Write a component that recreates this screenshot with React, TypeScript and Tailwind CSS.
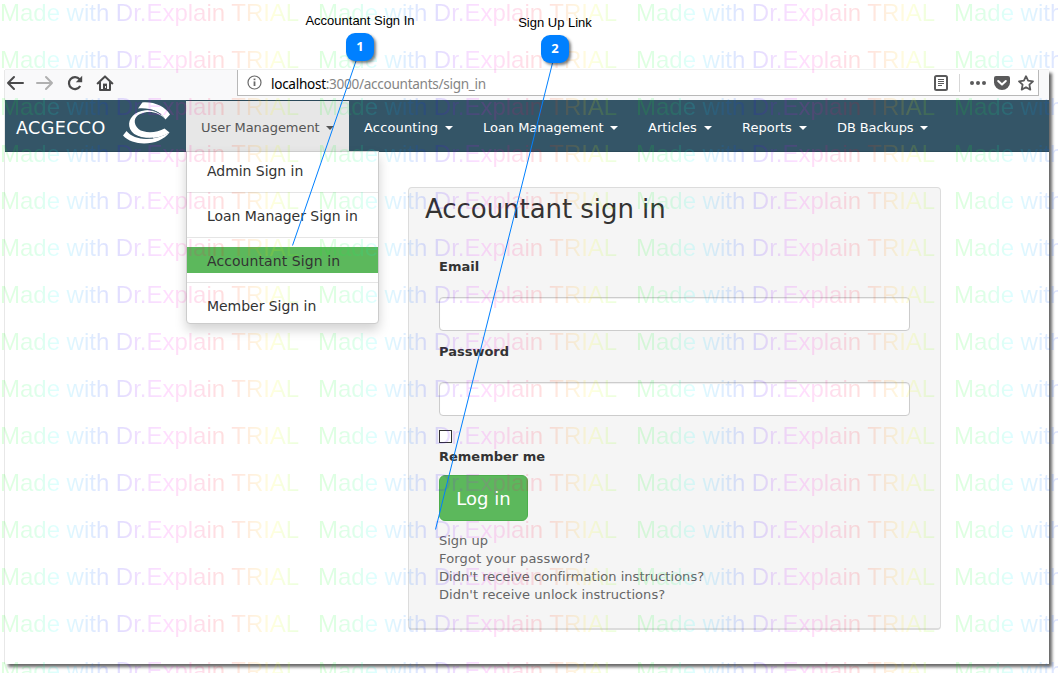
import React from "react";

type MenuItem = { label: string; width: string; tracking: string };

const navItems: MenuItem[] = [
  { label: "Accounting", width: "w-[119px]", tracking: "tracking-[0.16px]" },
  { label: "Loan Management", width: "w-[165px]", tracking: "tracking-[-0.03px]" },
  { label: "Articles", width: "w-[94px]", tracking: "tracking-[0.05px]" },
  { label: "Reports", width: "w-[95px]", tracking: "tracking-[0px]" },
  { label: "DB Backups", width: "w-[121px]", tracking: "tracking-[-0.1px]" },
];

const signIns = ["Admin Sign in", "Loan Manager Sign in", "Accountant Sign in", "Member Sign in"];

const links = [
  { text: "Sign up", tracking: "tracking-[0px]" },
  { text: "Forgot your password?", tracking: "tracking-[0.18px]" },
  { text: "Didn't receive confirmation instructions?", tracking: "tracking-[0.03px]" },
  { text: "Didn't receive unlock instructions?", tracking: "tracking-[0.05px]" },
];

function Caret() {
  return <span className="mt-px h-0 w-0 border-x-4 border-t-4 border-x-transparent border-t-current" />;
}

function Toolbar() {
  return (
    <div className="flex h-[30px] items-start bg-[#f9f9fa] text-[#4a4a4b]">
      <svg className="mt-[5px] ml-px h-4 w-[18px]" viewBox="0 0 18 16" fill="none" stroke="currentColor" strokeWidth="2" strokeLinecap="round" strokeLinejoin="round">
        <path d="M17 8H2M8 2 2 8l6 6" />
      </svg>
      <svg className="mt-[5px] ml-[12px] h-4 w-[18px] text-[#b0b0b0]" viewBox="0 0 18 16" fill="none" stroke="currentColor" strokeWidth="2" strokeLinecap="round" strokeLinejoin="round">
        <path d="M1 8h15M10 2l6 6-6 6" />
      </svg>
      <svg className="mt-[5px] ml-[13px] h-4 w-4" viewBox="0 0 16 16" fill="none" stroke="currentColor" strokeWidth="2.2">
        <path d="M12.6 4.2A6 6 0 1 0 13.2 11" />
        <path d="M15.2.8v6.4H8.8z" fill="currentColor" stroke="none" />
      </svg>
      <svg className="mt-[5px] ml-[13px] h-4 w-[18px]" viewBox="0 0 18 16" fill="none" stroke="currentColor" strokeWidth="2" strokeLinejoin="round" strokeLinecap="round">
        <path d="M1.600 8.400 9 1.400l7.400 7M4 7.600V15h10V7.600" />
        <path d="M7 8.600h4V15H7z" fill="currentColor" stroke="none" />
        <path d="M9.500 11.500v1" stroke="#fff" strokeWidth="1" />
      </svg>
      <div className="ml-[123px] flex h-[26px] w-[802px] items-center border border-t-0 border-[#b8b8b8] bg-white">
        <svg className="ml-[9px] h-[15px] w-[15px] text-[#6a6a6a]" viewBox="0 0 15 15" fill="none" stroke="currentColor">
          <circle cx="7.5" cy="7.5" r="6.5" strokeWidth="1.2" />
          <path d="M7.500 6.400V11" strokeWidth="1.8" />
          <path d="M7.500 3.600v1.600" strokeWidth="1.8" />
        </svg>
        <div className="ml-[9px] pt-[3px] font-['Noto_Sans',sans-serif] text-[13.6px] leading-5 tracking-[-0.3px] whitespace-nowrap text-[#858585]">
          <span className="text-black">localhost</span>:3000/accountants/sign_in
        </div>
        <div className="ml-auto flex items-center text-[#5a5a5b]">
          <svg className="h-4 w-[14px]" viewBox="0 0 14 16" fill="none" stroke="currentColor">
            <rect x="1" y="1" width="12" height="14" rx="1.5" strokeWidth="2" />
            <path d="M4 4.500h6M4 6.500h6M4 8.500h6M4 10.500h4" strokeWidth="1" />
          </svg>
          <span className="ml-[11px] h-[18px] w-px bg-[#d7d7d7]" />
          <svg className="ml-[10px] h-4 w-4" viewBox="0 0 16 16" fill="currentColor">
            <circle cx="2" cy="8" r="2" />
            <circle cx="8" cy="8" r="2" />
            <circle cx="14" cy="8" r="2" />
          </svg>
          <svg className="ml-[8px] h-4 w-4" viewBox="0 0 16 16">
            <path d="M2 1h12a2 2 0 0 1 2 2v4.500a8 7.500 0 0 1-16 0V3a2 2 0 0 1 2-2z" fill="currentColor" />
            <path d="M4.200 6 8 9.600 11.800 6" fill="none" stroke="#fff" strokeWidth="2" strokeLinecap="round" strokeLinejoin="round" />
          </svg>
          <svg className="mr-[4px] ml-[8px] h-4 w-4" viewBox="0 0 16 16" fill="none" stroke="currentColor" strokeWidth="1.8" strokeLinejoin="round">
            <path d="m8 1.200 2.100 4.500 4.900.6-3.600 3.400.9 4.900L8 12.200l-4.300 2.400.9-4.900L1 6.300l4.900-.6z" />
          </svg>
        </div>
      </div>
    </div>
  );
}

function Logo() {
  return (
    <svg className="h-[44px] w-[50px]" viewBox="0 0 50 44" fill="#fff">
      <path d="M16 7.500 20.300 1.500C32 .5 43 5.500 48 13.500L43.500 18.500C38 10 28 6.500 16 7.500z" />
      <path d="M43.500 18.500C37 8.500 24 6 13.500 12.500 5.500 18 5 27 12 33 22 39.500 37 38 47.500 31.500L42.500 27.500C35 32 22 32.500 16.500 28 11 23 11.500 16 18 13 27 9 37 11 43.500 18.500z" />
      <path d="M4.500 30C12 39.500 32 41 47.500 31.500 38 44.500 12 46.500 1 34.500z" />
      <path d="M14 11C23 6.800 32 8.500 39 13.500" fill="none" stroke="#345567" strokeWidth="0.8" />
      <path d="M8 30C13 36 22 38 31 37" fill="none" stroke="#345567" strokeWidth="0.8" />
    </svg>
  );
}

function Navbar() {
  return (
    <nav className="flex h-[52px] border-b border-[#2b4a5a] bg-[#345567] text-[13px] text-white">
      <div className="flex w-[181px] shrink-0 items-center">
        <span className="ml-[11px] w-[106px] pt-[6px] text-[17.6px] tracking-[0.35px]">ACGECCO</span>
        <div className="mb-[5px]"><Logo /></div>
      </div>
      <div className="relative h-[51px] w-[163px] shrink-0 border-t border-[#2b4a5a] bg-[#e7e7e7] text-[#555]">
        <div className="flex h-full items-center justify-between pt-[3px] pr-[15px] pl-[15px] whitespace-nowrap">
          <span className="tracking-[-0.05px]">User Management</span>
          <Caret />
        </div>
        <ul className="absolute top-[50px] left-0 w-[193px] rounded-b-[4px] border border-[#ccc] bg-white pt-[5px] pb-[5px] text-[14px] text-[#333] shadow-[0_6px_12px_rgba(0,0,0,0.175)]">
          {signIns.map((label, index) => (
            <React.Fragment key={label}>
              {index > 0 && <li className="my-[9px] h-px bg-[#e5e5e5]" />}
              <li className={index === 2 ? "h-[26px] bg-[#5cb85c] pl-5 leading-[28px] tracking-[0.08px] whitespace-nowrap" : "h-[26px] pl-5 leading-[28px] tracking-[-0.04px] whitespace-nowrap"}>{label}</li>
            </React.Fragment>
          ))}
        </ul>
      </div>
      {navItems.map((item) => (
        <div key={item.label} className={`flex shrink-0 items-center justify-between px-[15px] pt-[4px] whitespace-nowrap ${item.width}`}>
          <span className={item.tracking}>{item.label}</span>
          <Caret />
        </div>
      ))}
    </nav>
  );
}

function SignInForm() {
  return (
    <form className="mt-[35px] ml-[403px] flex h-[443px] w-[533px] flex-col rounded-[4px] border border-b-2 border-[#dcdcdc] bg-[#f5f5f5] pr-[30px] pl-[30px] text-[13px] text-[#333]">
      <h1 className="mt-[4px] -ml-[14px] text-[26px] leading-[34px] tracking-[-0.05px] whitespace-nowrap">Accountant sign in</h1>
      <label className="mt-[31px] leading-5 font-bold">Email</label>
      <input className="mt-[20px] block h-[34px] w-[471px] rounded-[4px] border border-[#ccc] bg-white shadow-[inset_0_1px_1px_rgba(0,0,0,0.075)]" />
      <label className="mt-[11px] leading-5 font-bold">Password</label>
      <input className="mt-[20px] block h-[34px] w-[471px] rounded-[4px] border border-[#ccc] bg-white shadow-[inset_0_1px_1px_rgba(0,0,0,0.075)]" />
      <span className="mt-[14px] block h-[13px] w-[13px] border border-[#333] bg-white" />
      <label className="mt-[4px] leading-5 font-bold">Remember me</label>
      <button type="button" className="mt-[8px] h-[46px] w-[89px] rounded-[6px] border border-[#4cae4c] bg-[#5cb85c] text-[18px] text-white">Log in</button>
      <div className="mt-[11px] flex flex-col leading-[18px] whitespace-nowrap text-[#666]">
        {links.map(({ text, tracking }) => (
          <a key={text} className={tracking}>{text}</a>
        ))}
      </div>
    </form>
  );
}

function Watermark() {
  return (
    <div className="pointer-events-none absolute inset-0 overflow-hidden opacity-[0.125]">
      <div className="-mt-px grid w-[1272px] grid-cols-4">
        {Array.from({ length: 60 }, (_, i) => (
          <div key={i} className="h-[47px] w-[318px]">
            <span className="inline-block w-[300px] bg-linear-[90deg,#00ff00_0%,#00ff60_12%,#00ffff_19%,#0080ff_29%,#0000ff_38%,#8000ff_45%,#ff00ff_55%,#ff0080_65%,#ff0000_75%,#ff8000_83%,#ffff00_91%,#80ff00_98%] bg-clip-text font-['Liberation_Sans',Arial,sans-serif] text-[24px] leading-[27px] tracking-[-0.02px] whitespace-nowrap text-transparent">
              Made with Dr.Explain TRIAL
            </span>
          </div>
        ))}
      </div>
    </div>
  );
}

function Callout({ label, number, className }: { label: string; number: number; className: string }) {
  return (
    <div className={`absolute flex flex-col items-center ${className}`}>
      <span className="h-[15px] pt-px font-['Liberation_Sans',Arial,sans-serif] text-[13px] leading-[15px] whitespace-nowrap text-black">{label}</span>
      <span className="mt-[6px] flex h-7 w-7 items-center justify-center rounded-[9px] bg-[#0080ff] font-['Open_Sans',sans-serif] text-[13px] font-bold text-white shadow-[2px_2px_3px_rgba(0,0,0,0.5)]">{number}</span>
    </div>
  );
}

export default function App() {
  return (
    <div className="relative h-[673px] w-[1058px] overflow-hidden bg-white pt-[70px] pl-[5px] font-['DejaVu_Sans',sans-serif]">
      <main className="h-[594px] w-[1044px] bg-white shadow-[-1px_0_0_#e8e8e8,0_-1px_0_#f0f0f0,3px_3px_3px_rgba(0,0,0,0.6)]">
        <Toolbar />
        <Navbar />
        <SignInForm />
      </main>
      <Watermark />
      <svg className="pointer-events-none absolute inset-0" width="1058" height="673" fill="none" stroke="#0080ff">
        <path d="M356 61 292.500 245.500M552.500 63 435.500 529.500" />
      </svg>
      <Callout label="Accountant Sign In" number={1} className="top-[12px] left-[305px] w-[110px]" />
      <Callout label="Sign Up Link" number={2} className="top-[14px] left-[518px] w-[74px]" />
    </div>
  );
}
